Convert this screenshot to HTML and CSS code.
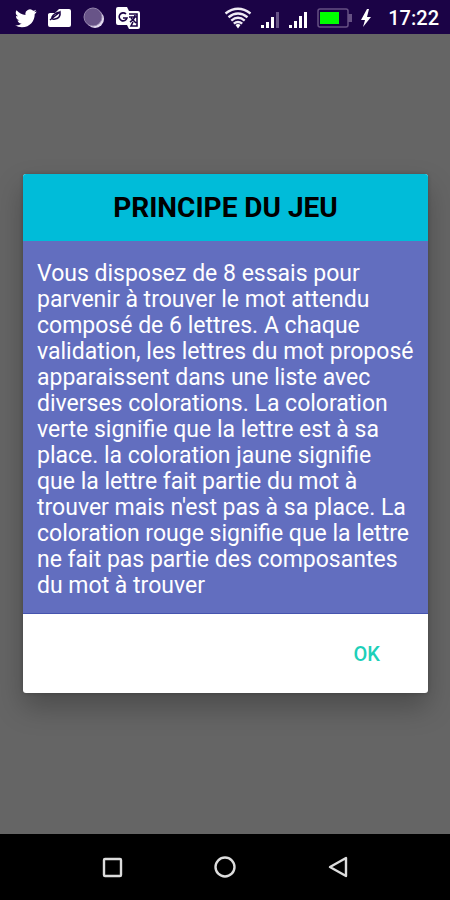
FILE: index.html
```html
<!DOCTYPE html>
<html lang="fr">
<head>
<meta charset="utf-8">
<meta name="viewport" content="width=device-width, initial-scale=1">
<title>Principe du jeu</title>
<link rel="stylesheet" href="styles.css">
</head>
<body>
<header class="status-bar">
  <div class="notifications">
    <svg width="22" height="22" viewBox="0 0 24 24" fill="#fff" aria-hidden="true"><path d="M23.6 4.9c-.9.4-1.800.7-2.800.8 1-.6 1.800-1.600 2.200-2.700-1 .6-2 1-3.100 1.200a4.900 4.900 0 0 0-8.400 4.500C7.700 8.500 4.100 6.600 1.700 3.600a4.900 4.900 0 0 0 1.500 6.600c-.8 0-1.600-.3-2.200-.6v.1c0 2.400 1.700 4.400 3.900 4.800-.7.200-1.500.2-2.200.1.600 2 2.400 3.400 4.600 3.400A9.900 9.900 0 0 1 0 20a13.900 13.900 0 0 0 7.500 2.200c9.100 0 14-7.500 14-14v-.6c1-.7 1.800-1.600 2.100-2.700z"/></svg>
    <svg width="24" height="20" viewBox="0 0 24 20" aria-hidden="true"><path d="M0 6.500Q0 5 2 5h5l4-4h10q2 0 2 2v14q0 2-2 2H2q-2 0-2-2z" fill="#fff"/><path d="M2 12L12 4Q13 10 7 11q-4 1-3-2Q6 5 12 4" fill="none" stroke="#1b0346" stroke-width="1.500"/></svg>
    <svg width="22" height="22" viewBox="0 0 22 22" aria-hidden="true"><circle cx="12" cy="12" r="9" fill="#e4dcf0"/><circle cx="10" cy="10" r="9" fill="#685488" stroke="#9585ad"/></svg>
    <svg width="24" height="24" viewBox="0 0 24 24" aria-hidden="true"><path d="M2 1h9l2 4h9q2 0 2 2v14q0 2-2 2h-9l-2-4H2q-2 0-2-2V3q0-2 2-2z" fill="#fff"/><path d="M10 8a4 4 0 1 0 1 4H7M13 8h8v12h-6l2-4M13 11h8M19 9q0 4-5 7M15 12l5 5" fill="none" stroke="#1b0346" stroke-width="1.600"/></svg>
  </div>
  <div class="system">
    <svg width="28" height="22" viewBox="0 0 28 22" fill="none" stroke="#f0ebf5" stroke-width="2.400" aria-hidden="true"><path d="M1.500 6.500Q14-3 26.500 6.500M4.500 10.300q9.500-7.500 19 0M7.300 13.600q6.700-5.600 13.400 0M9.800 16.700q4.200-3.600 8.400 0"/><path d="M11.500 18q2.500-2 5 0L14 21.500z" fill="#fff" stroke="none"/></svg>
    <svg width="20" height="20" viewBox="0 0 20 20" fill="#fff" aria-hidden="true"><path d="M1 17h3v3H1zM6 14h3v6H6zM11 9h3v11h-3z"/><path d="M16 4h3v16h-3z" fill="#675487"/></svg>
    <svg width="20" height="20" viewBox="0 0 20 20" fill="#fff" aria-hidden="true"><path d="M1 17h3v3H1zM6 13h3v7H6zM11 8h3v12h-3zM16 4h3v16h-3z"/></svg>
    <svg width="36" height="20" viewBox="0 0 36 20" aria-hidden="true"><rect x="2" y="1" width="30" height="18" rx="2" fill="none" stroke="#655083" stroke-width="1.500"/><path d="M32 6h4v8h-4z" fill="#655083"/><path d="M4 4h19v12H4z" fill="#0f0"/></svg>
    <svg width="12" height="20" viewBox="0 0 12 20" fill="#fff" aria-hidden="true"><path d="M7 1L1 12h4L3 19 11 9H7L9 1z"/></svg>
    <time class="clock">17:22</time>
  </div>
</header>
<main class="backdrop">
  <section class="dialog" role="dialog" aria-modal="true" aria-labelledby="dialog-title">
    <h1 class="dialog-title" id="dialog-title">PRINCIPE DU JEU</h1>
    <p class="dialog-text">Vous disposez de 8 essais pour<br>parvenir à trouver le mot attendu<br>composé de 6 lettres. A chaque<br>validation, les lettres du mot proposé<br>apparaissent dans une liste avec<br>diverses colorations. La coloration<br>verte signifie que la lettre est à sa<br>place. la coloration jaune signifie<br>que la lettre fait partie du mot à<br>trouver mais n'est pas à sa place. La<br>coloration rouge signifie que la lettre<br>ne fait pas partie des composantes<br>du mot à trouver</p>
    <div class="dialog-actions"><button class="ok" type="button">OK</button></div>
  </section>
</main>
<nav class="nav-bar" aria-label="Navigation">
  <button class="nav-button" type="button" aria-label="Applications récentes"><svg width="24" height="24" viewBox="0 0 24 24"><rect x="4" y="4" width="17" height="17" rx="1"/></svg></button>
  <button class="nav-button" type="button" aria-label="Accueil"><svg width="24" height="24" viewBox="0 0 24 24"><circle cx="12" cy="12" r="9.500"/></svg></button>
  <button class="nav-button" type="button" aria-label="Retour"><svg width="24" height="24" viewBox="0 0 24 24"><path d="M20 3v18L4 12z" stroke-linejoin="round"/></svg></button>
</nav>
</body>
</html>
```

FILE: styles.css
```css
* { box-sizing: border-box; }

body {
  margin: 0;
  min-height: 100vh;
  display: flex;
  flex-direction: column;
  font-family: Roboto, "Liberation Sans", sans-serif;
  background: #656565;
}

svg { display: block; flex: none; }

.status-bar {
  display: flex;
  align-items: center;
  justify-content: space-between;
  height: 34px;
  padding: 2px 11px 0 15px;
  background: #1b0346;
}

.notifications { display: flex; align-items: center; gap: 11px; }

.system { display: flex; align-items: center; gap: 8px; }

.clock {
  margin-left: 8px;
  color: #fff;
  font-size: 20px;
  font-weight: 500;
  line-height: 24px;
}

.backdrop {
  flex: 1;
  display: flex;
  align-items: center;
  padding: 24px 22px 25px 23px;
}

.dialog {
  width: 100%;
  overflow: hidden;
  border-radius: 3px;
  background: #fff;
  box-shadow: 0 14px 28px rgba(0, 0, 0, 0.26), 0 0 4px rgba(0, 0, 0, 0.2);
}

.dialog-title {
  margin: 0;
  padding: 18px 14px 17px;
  background: #00bcd9;
  color: #000;
  font-size: 28px;
  font-weight: 700;
  line-height: 32px;
  text-align: center;
}

.dialog-text {
  margin: 0;
  padding: 20px 14px 14px;
  border-bottom: 1px solid #4654ae;
  background: #626ebf;
  color: #fff;
  font-size: 23px;
  line-height: 26px;
  white-space: nowrap;
}

.dialog-actions {
  display: flex;
  justify-content: flex-end;
  padding: 16px 32px 15px;
}

.ok {
  padding: 0 16px;
  height: 48px;
  border: 0;
  background: none;
  color: #1dd0b9;
  font: 500 20px/24px Roboto, "Liberation Sans", sans-serif;
}

.nav-bar {
  display: flex;
  justify-content: center;
  gap: 65px;
  height: 66px;
  background: #000;
}

.nav-button {
  display: flex;
  align-items: center;
  justify-content: center;
  width: 48px;
  padding: 0;
  border: 0;
  background: none;
}

.nav-button svg { fill: none; stroke: #ddd; stroke-width: 2.4; }
```
